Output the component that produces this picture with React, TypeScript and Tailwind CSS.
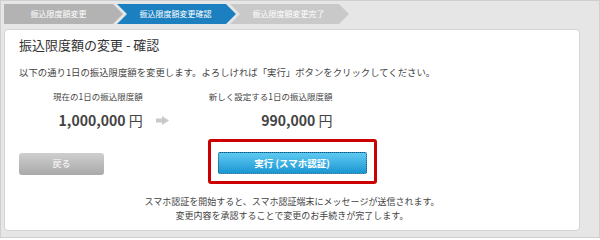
const jp = { fontFamily: '"Noto Sans CJK JP", "Liberation Sans", sans-serif' };

const steps = [
  { label: "振込限度額変更", state: "done" },
  { label: "振込限度額変更確認", state: "current" },
  { label: "振込限度額変更完了", state: "todo" },
];

function StepBar() {
  return (
    <div className="flex h-[20px]">
      {steps.map((s, i) => (
        <div
          key={s.label}
          className={`flex h-full w-[119px] items-center justify-center text-[8px] text-white ${
            i === 0
              ? "[clip-path:polygon(0_0,109px_0,119px_50%,109px_100%,0_100%)]"
              : "-ml-[6px] pl-[8px] [clip-path:polygon(0_0,109px_0,119px_50%,109px_100%,0_100%,10px_50%)]"
          } ${
            s.state === "current"
              ? "bg-[#1c7fbf]"
              : s.state === "done"
              ? "bg-[#b3b3b3]"
              : "bg-[#c9c9c9]"
          }`}
        >
          <span className="pr-[10px]">{s.label}</span>
        </div>
      ))}
    </div>
  );
}

function ArrowIcon() {
  return (
    <svg width="13" height="9" viewBox="0 0 13 9" className="block">
      <rect x="0" y="2.5" width="7" height="4" fill="#c9c9c9" />
      <polygon points="6,0 13,4.5 6,9" fill="#c9c9c9" />
    </svg>
  );
}

export default function App() {
  return (
    <div
      className="flex h-[238px] w-[600px] flex-col border border-[#cfcfcf] bg-[#e6e6e6] pl-[3px] pt-[3px]"
      style={jp}
    >
      <StepBar />

      <div className="mt-[5px] flex w-[576px] flex-col rounded-[4px] border border-[#d4d4d4] bg-white px-[14px] pb-[7px] pt-[5px] text-[#444]">
        <h1 className="text-[13px] leading-[20px] text-[#333]">振込限度額の変更 - 確認</h1>

        <p className="mt-[10px] text-[9.4px] leading-[14px]">
          以下の通り1日の振込限度額を変更します。よろしければ「実行」ボタンをクリックしてください。
        </p>

        <div className="mt-[11px] flex items-end pl-[34px]">
          <div className="flex flex-col items-end">
            <span className="text-[8.5px] leading-[12px]">現在の1日の振込限度額</span>
            <span className="mt-[8px] text-[14px] font-bold leading-[20px]">
              1,000,000 <span className="font-normal">円</span>
            </span>
          </div>
          <div className="mb-[5px] ml-[13px]">
            <ArrowIcon />
          </div>
          <div className="ml-[40px] flex flex-col items-end">
            <span className="text-[8.5px] leading-[12px]">新しく設定する1日の振込限度額</span>
            <span className="mt-[8px] text-[14px] font-bold leading-[20px]">
              990,000 <span className="font-normal">円</span>
            </span>
          </div>
        </div>

        <div className="mt-[9px] grid grid-cols-[1fr_auto_1fr] items-center">
          <div>
            <button className="h-[22px] w-[85px] rounded-[3px] bg-gradient-to-b from-[#cfcfcf] to-[#a9a9a9] text-[9px] text-white">
              戻る
            </button>
          </div>
          <div className="rounded-[3px] border-[3px] border-[#cc0000] px-[7px] pb-[7px] pt-[6px]">
            <button className="h-[22px] w-[149px] rounded-[2px] border border-dotted border-[#1d4e6b] bg-gradient-to-b from-[#5dcaf1] to-[#1697d3] text-[9.5px] font-bold text-white">
              実行 (スマホ認証)
            </button>
          </div>
          <div />
        </div>

        <div className="mt-[11px] text-center text-[9px] leading-[14px]">
          <p>スマホ認証を開始すると、スマホ認証端末にメッセージが送信されます。</p>
          <p>変更内容を承認することで変更のお手続きが完了します。</p>
        </div>
      </div>
    </div>
  );
}
